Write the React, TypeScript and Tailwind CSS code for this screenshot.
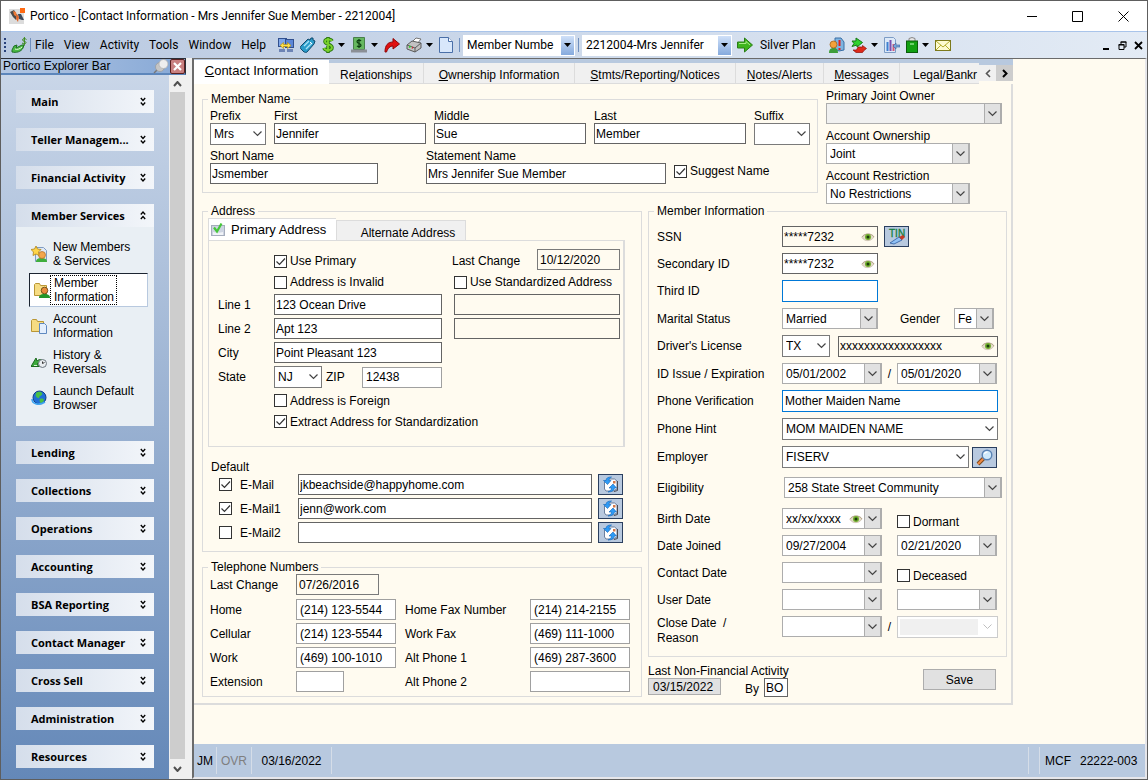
import type { ReactNode } from "react";
import { clsx } from "clsx";

const UI = "font-['Roboto','Noto_Sans',sans-serif]";

/* ---------- icons ---------- */

function Svg({ w = 16, h = 16, children }: { w?: number; h?: number; children: ReactNode }) {
  return (
    <svg width={w} height={h} viewBox={`0 0 ${w} ${h}`} className="shrink-0" aria-hidden="true">
      {children}
    </svg>
  );
}

const AppIcon = () => (
  <Svg>
    <rect y="1" width="15" height="15" fill="#dcdcdc" />
    <path d="M1 4l4-2 3 5-1 5-3-3z" fill="#4a4a4a" />
    <path d="M4 3l3 1 1 5-3-2z" fill="#f07a35" />
    <path d="M9 6l3 0 3 6-2 0-3-1z" fill="#3d4a5c" />
    <path d="M8 6l2 3-1 5-2-3z" fill="#e0662a" />
    <rect x="11" width="5" height="5" fill="#ff6a13" />
  </Svg>
);

const CashHandIcon = () => (
  <Svg w={17}>
    <path d="M1 13l2-4 3-1-1 3 6-3 2 0-1 3c-2 4-7 5-11 4z" fill="#4cbb45" stroke="#1c6e22" />
    <path d="M4 12c2 1 5 0 7-2" stroke="#e2f7da" fill="none" />
    <path d="M15.500 2.500C14 1 11.500 1.500 11.500 3s3.500 1 3.500 2.500-2.500 1.700-4 .5M13.400 0v8.500" stroke="#3c8a1c" fill="none" />
  </Svg>
);

const NetworkIcon = () => (
  <Svg>
    <rect x=".5" y="1.500" width="8" height="8" fill="#7fa7e8" stroke="#31508f" />
    <rect x="7.500" y="2.500" width="8" height="8" fill="#5b86d8" stroke="#31508f" />
    <path d="M1 12h6v3H1zM9 12h6v3H9z" fill="#6d84b5" />
    <path d="M2 8.500l3.500-3v2h4v-2l3.500 3-3.500 3v-2h-4v2z" fill="#ffe14a" stroke="#b58a00" strokeWidth=".6" />
  </Svg>
);

const TicketIcon = () => (
  <Svg>
    <path d="M1 9l7-7 2 1 1-2 2 0 0 2 2 1-1 3-7 8c-1 1-2 0-3 0l-3-3c-1-1-1-2 0-3z" fill="#2a9bc9" stroke="#104a6e" />
    <path d="M4 9l5-5M6 12l6-6" stroke="#a8e4f8" strokeWidth="1.400" />
    <path d="M10 5l2 2" stroke="#fff" />
  </Svg>
);

const DollarIcon = () => (
  <Svg w={12}>
    <path d="M10 4C9 2 3 1.500 3 4.500S10 7 10 10.500 3 14 2 11M6 0v16" stroke="#2d7a12" strokeWidth="3.600" fill="none" />
    <path d="M10 4C9 2 3 1.500 3 4.500S10 7 10 10.500 3 14 2 11M6 1v14" stroke="#7bd32d" strokeWidth="1.800" fill="none" />
  </Svg>
);

const BillIcon = () => (
  <Svg>
    <path d="M2.500.5h11v12h-11z" fill="#66b860" stroke="#48804a" />
    <path d="M0 12.500h16v3H0z" fill="#8b8f96" />
    <path d="M10 4C9 2.500 6 3 6 4.800S10 6.500 10 8.200 7 10 6 8.800M8 2v9" stroke="#0c3f10" strokeWidth="1.200" fill="none" />
  </Svg>
);

const ForwardIcon = () => (
  <Svg>
    <path d="M1 15C1 8 4 5 9 5V1.500L15.500 7 9 12V9C6 9 4 11 2.500 15z" fill="#e01010" stroke="#8e0808" />
  </Svg>
);

const PrinterIcon = () => (
  <Svg>
    <path d="M6 5l4-4 5 1-4 5z" fill="#fff" stroke="#777" />
    <path d="M1 8l5-4 9 2v5l-6 4-8-3z" fill="#c2c2c2" stroke="#5b5b5b" />
    <path d="M1 8l8 3 6-5M9 11v4" stroke="#5b5b5b" fill="none" />
    <path d="M3 9.500l1.500.5" stroke="#2fd02f" strokeWidth="2" />
    <path d="M6 10.500l1 .4" stroke="#d03030" strokeWidth="2" />
  </Svg>
);

const PageIcon = () => (
  <Svg w={14}>
    <path d="M.5.5h9l4 4v11H.5z" fill="#d8e7fb" stroke="#4a6fa8" />
    <path d="M9.500.5v4h4" fill="#fff" stroke="#4a6fa8" />
  </Svg>
);

const GoIcon = () => (
  <Svg>
    <path d="M.5 5h7V1l8 7-8 7v-4h-7z" fill="#3fb51d" stroke="#2a7d16" />
    <path d="M2 6.500h7V4.500l4 3.500" stroke="#a6ea85" fill="none" />
  </Svg>
);

const MemberAlertIcon = () => (
  <Svg>
    <path d="M6 1h6l3 4v8l-5 1-4-2z" fill="#7eb4e0" stroke="#3a6ea5" />
    <path d="M10.500 3v6M10.500 11v2" stroke="#e02020" strokeWidth="2" />
    <path d="M0 16c0-4 2-5 4.500-5S9 12 9 16z" fill="#3e9e3a" />
    <circle cx="4.500" cy="7.500" r="3.500" fill="#f4a13a" stroke="#a5631a" strokeWidth=".8" />
  </Svg>
);

const TransferIcon = () => (
  <Svg>
    <path d="M15.500 11.500l-4-3v1.500H7l-1.500 3H2l3 2.500h6.500l1-1.500z" fill="#e02a1a" stroke="#8e1008" strokeWidth=".7" />
    <path d="M1 4h4V1l6.500 4.500L6 10V8L1 9.500l2-3z" fill="#2fd32f" stroke="#187818" />
  </Svg>
);

const ChartIcon = () => (
  <Svg>
    <path d="M.5.5h9l2 2v13H.5z" fill="#dce9f8" stroke="#7d9cc5" />
    <path d="M3.500 5v9" stroke="#3f7fd0" strokeWidth="2" />
    <path d="M6.500 3v11" stroke="#7a4fb0" strokeWidth="2" />
    <path d="M9.500 7v7" stroke="#d05a7a" strokeWidth="2" />
    <path d="M9 9l3-3v2h4v2h-4v2z" fill="#7aa5db" stroke="#345f9c" strokeWidth=".6" />
  </Svg>
);

const BagIcon = () => (
  <Svg w={12}>
    <path d="M3 4V1.500L6 .5l3 1V4" fill="#e6e6e6" stroke="#888" />
    <rect x=".5" y="4" width="11" height="11.500" fill="#12a012" stroke="#0b5c0b" />
    <path d="M4 7h4" stroke="#8be08b" strokeWidth="1.500" />
  </Svg>
);

const EnvelopeIcon = () => (
  <Svg>
    <rect x=".5" y="3.500" width="15" height="10" fill="#fdfbd0" stroke="#7d7a1c" />
    <path d="M1 4l7 6 7-6M1 13l5-5M15 13l-5-5" stroke="#b3ad2c" fill="none" />
  </Svg>
);

const PinIcon = () => (
  <Svg>
    <path d="M1 15l5-5" stroke="#777" strokeWidth="1.400" />
    <circle cx="7" cy="9" r="4.500" fill="#c6c6c6" stroke="#999" strokeWidth=".7" />
    <circle cx="10.500" cy="6" r="4.500" fill="#eee" stroke="#aaa" strokeWidth=".7" />
  </Svg>
);

const NewMemberIcon = () => (
  <Svg>
    <path d="M4.500 1.500h8l3 3v11h-11z" fill="#dfe9f6" stroke="#7f9cc2" />
    <path d="M5 16c0-3 2-4 5.500-4s5.500 1 5.500 4z" fill="#3fae3c" />
    <circle cx="11" cy="9" r="3.500" fill="#f3a64c" stroke="#b36d20" strokeWidth=".7" />
    <path d="M5 0l1.500 3 3.500.5L7.500 6 8 9.500 5 8 2 9.500 2.500 6 0 3.500 3.500 3z" fill="#ffd548" stroke="#b08418" strokeWidth=".8" />
  </Svg>
);

const FolderShape = () => (
  <path d="M.5 13.500v-11l1-1h4l1 2h6v10z" fill="#f6dc82" stroke="#b99635" />
);

const FolderMemberIcon = () => (
  <Svg>
    <FolderShape />
    <path d="M5 16c0-3 2-4 5.500-4s5.500 1 5.500 4z" fill="#22962a" />
    <circle cx="10.500" cy="8.500" r="3.300" fill="#e88c3c" stroke="#59400e" strokeWidth=".8" />
  </Svg>
);

const FolderPageIcon = () => (
  <Svg>
    <FolderShape />
    <path d="M8.500 5.500h5l2 2v8h-7z" fill="#e4effd" stroke="#5f89c0" />
  </Svg>
);

const HistoryIcon = () => (
  <Svg>
    <path d="M0 12.500L5 4l1 3c2-2 5-2 6 0l-3 1-3 2 3 2.500z" fill="#3caa3c" stroke="#1d6a1f" />
    <path d="M3 11.500h3" stroke="#d6f2d2" />
    <circle cx="11.500" cy="9.500" r="4" fill="#e9edf0" stroke="#6d7780" />
    <path d="M11.500 7.500v2l2-1" stroke="#333" fill="none" />
  </Svg>
);

const GlobeIcon = () => (
  <Svg>
    <circle cx="8.500" cy="7.500" r="6.500" fill="#1f6fd6" stroke="#0f3c86" />
    <path d="M5 3c3-2 5-1 6 0s-1 3-2 3 0 3-2 2-3-2-2-5zM9 9c2-1 4 0 4 1s-2 3-3 3-2-3-1-4z" fill="#49bf45" />
    <path d="M1 9c0 5 7 7 13 3" stroke="#3fa4f0" strokeWidth="1.600" fill="none" />
  </Svg>
);

const EyeIcon = () => (
  <Svg w={14} h={10}>
    <path d="M1 5.500C3 1 11 1 13 5c-3 4.500-9 5-12 .5z" fill="#e3dac8" stroke="#cfc5b2" />
    <path d="M1 5C3 1 11 1 13 5" fill="none" stroke="#b7a78e" />
    <circle cx="7" cy="5" r="3" fill="#6fae2c" />
    <circle cx="7" cy="5" r="1.500" fill="#1c3a0c" />
  </Svg>
);

const TinIcon = () => (
  <Svg w={20} h={17}>
    <text x="2" y="9" fontSize="10" fill="#13803c" stroke="#13803c" strokeWidth=".3" fontFamily="Liberation Sans, sans-serif">TIN</text>
    <path d="M3 15l9-6 3 3-8 4z" fill="#8fc0f5" stroke="#2c5a9e" strokeWidth=".8" />
    <path d="M12 9l4-2 2 2-3 3z" fill="#c63c26" />
  </Svg>
);

const MagnifierIcon = () => (
  <Svg w={18} h={17}>
    <path d="M2 15l6-6" stroke="#7c4a1e" strokeWidth="4" />
    <path d="M2 15l6-6" stroke="#ef8a45" strokeWidth="2" />
    <circle cx="11" cy="6" r="4.800" fill="#cfe9fb" stroke="#5a83b4" strokeWidth="1.400" />
    <path d="M8.500 5c.5-1.500 2-2 3-1.800" stroke="#fff" fill="none" strokeWidth="1.200" />
  </Svg>
);

const MailSyncIcon = () => (
  <Svg w={17} h={17}>
    <path d="M2.500 6l4-3h6l2.500 2v8l-4 2H4l-1.500-2z" fill="#fff" stroke="#6b7f9e" />
    <path d="M11 5h2.500v2.500H11z" fill="#d37848" />
    <path d="M15.500 5v9.500L12 15.500" stroke="#4a4a52" fill="none" />
    <path d="M9.500 1C6 1 4 2 4 4.500H1.500l4 4 3.500-4H7C7 3 8 2 9.500 1z" fill="#2f9bf5" stroke="#0f63b8" strokeWidth=".6" />
    <path d="M6 16c4 0 6-1.500 6.500-4h2L11 8l-4 4h2.500c0 2-1.500 3-3.500 4z" fill="#2f9bf5" stroke="#0f63b8" strokeWidth=".6" />
  </Svg>
);

const TabCheckIcon = () => (
  <Svg>
    <rect x=".5" y="3.500" width="13" height="10" fill="#cdd4e2" stroke="#a5adbd" />
    <path d="M2 10c3 1 7 1 10 0v3H2z" fill="#f0f3f8" />
    <path d="M3 5.500l3 4 4.500-8" stroke="#45c63a" strokeWidth="2.200" fill="none" />
  </Svg>
);

const Caret = () => (
  <Svg w={7} h={4}>
    <path d="M0 0h7L3.500 4z" fill="#000" />
  </Svg>
);

function Chevrons({ up = false }: { up?: boolean }) {
  return (
    <Svg w={6} h={9}>
      <path
        d={up ? "M.8 3.500L3 1l2.200 2.500M.8 8L3 5.500 5.200 8" : "M.8 1L3 3.500 5.200 1M.8 5.500L3 8l2.200-2.500"}
        stroke="#000"
        strokeWidth="1.300"
        fill="none"
      />
    </Svg>
  );
}

/* ---------- form controls ---------- */

function TextBox({ id, value = "", label, className }: { id: string; value?: string; label?: string; className?: string }) {
  return (
    <input
      id={id}
      type="text"
      aria-label={label}
      defaultValue={value}
      className={clsx("h-[21px] min-w-0 border text-black outline-none", className)}
    />
  );
}

const BOX = "border-[#646464] bg-white px-px";
const SOFT = "border-[#a0a0a0] bg-white px-[3px]";
const FOCUS = "h-[22px] border-[#0078d7] bg-white px-[2px]";

function MaskedBox({ id, value, className, label }: { id: string; value: string; className: string; label?: string }) {
  return (
    <div className={clsx("relative flex h-[21px] items-center", className)}>
      <TextBox id={id} value={value} label={label} className="w-full border-[#646464] bg-inherit px-px" />
      <span className="absolute right-[3px]">
        <EyeIcon />
      </span>
    </div>
  );
}

type ComboProps = {
  id: string;
  value?: string;
  label?: string;
  className?: string;
  flat?: boolean;
  disabled?: boolean;
  masked?: boolean;
};

// flat: white drop-down with a bare chevron; otherwise the grey button style
function Combo({ id, value = "", label, className, flat = false, disabled = false, masked = false }: ComboProps) {
  return (
    <div className={clsx("relative", flat ? "h-[22px]" : "h-[21px]", className)}>
      <select
        id={id}
        aria-label={label}
        disabled={disabled}
        className={clsx(
          "block h-full w-full appearance-none border pl-[3px] text-black opacity-100 outline-none",
          flat ? "border-[#7a7a7a] pr-4" : "border-[#adadad] pr-[18px]",
          disabled ? "bg-[#f0f0f0]" : "bg-white",
        )}
      >
        <option>{value}</option>
      </select>
      <span
        className={clsx(
          "pointer-events-none absolute inset-y-0 right-0 flex w-[18px] items-center justify-center",
          !flat && "border border-r-2 border-[#adadad] bg-[#e1e1e1]",
        )}
      >
        <Svg w={9} h={6}>
          <path d="M.5.5l4 4 4-4" stroke="#444" strokeWidth="1.200" fill="none" />
        </Svg>
      </span>
      {masked && (
        <span className="pointer-events-none absolute inset-y-0 right-[19px] flex items-center">
          <EyeIcon />
        </span>
      )}
    </div>
  );
}

function Check({ label, checked = false, className }: { label: string; checked?: boolean; className?: string }) {
  return (
    <label className={clsx("flex items-center whitespace-nowrap", className)}>
      <span className="relative flex size-[13px] shrink-0">
        <input
          type="checkbox"
          defaultChecked={checked}
          className="peer size-[13px] appearance-none border border-[#333] bg-white"
        />
        <svg
          viewBox="0 0 13 13"
          className="pointer-events-none absolute inset-0 hidden peer-checked:block"
          aria-hidden="true"
        >
          <path d="M2.500 6.500l3 3 5.500-6" stroke="#333" strokeWidth="1.200" fill="none" />
        </svg>
      </span>
      <span>{label}</span>
    </label>
  );
}

function Group({ title, className, children }: { title: string; className?: string; children: ReactNode }) {
  return (
    <fieldset className={clsx("min-w-0 border border-[#dcdcdc]", className)}>
      <legend className="ml-[5px] px-[3px]">{title}</legend>
      {children}
    </fieldset>
  );
}

function Stacked({ id, label, children }: { id: string; label: string; children: ReactNode }) {
  return (
    <div className="flex flex-col">
      <label htmlFor={id}>{label}</label>
      {children}
    </div>
  );
}

function InfoRow({ id, label, children }: { id: string; label: string; children: ReactNode }) {
  return (
    <div className="flex items-center">
      <label htmlFor={id} className="w-[125px] shrink-0">
        {label}
      </label>
      {children}
    </div>
  );
}

function IconButton({ label, children }: { label: string; children: ReactNode }) {
  return (
    <button
      type="button"
      aria-label={label}
      className="flex h-[21px] w-[25px] shrink-0 items-center justify-center border border-[#2b3f5f] bg-[#b8c9df]"
    >
      {children}
    </button>
  );
}

/* ---------- window chrome ---------- */

function TitleBar() {
  return (
    <header className={clsx("flex h-[30px] items-center bg-white pl-2", UI)}>
      <AppIcon />
      <h1 className="ml-[5px] flex-1 text-xs">Portico - [Contact Information - Mrs Jennifer Sue Member - 2212004]</h1>
      <div className="flex">
        <button type="button" aria-label="Minimize" className="flex w-[45px] justify-center">
          <Svg w={11} h={11}><path d="M0 5.500h10" stroke="#000" /></Svg>
        </button>
        <button type="button" aria-label="Maximize" className="flex w-[45px] justify-center">
          <Svg w={11} h={11}><path d="M.5.500h10v10H.5z" stroke="#000" fill="none" /></Svg>
        </button>
        <button type="button" aria-label="Close" className="flex w-[47px] justify-center">
          <Svg w={11} h={11}><path d="M.5.500l10 10M10.500.5l-10 10" stroke="#000" fill="none" /></Svg>
        </button>
      </div>
    </header>
  );
}

const Divider = () => <span className="h-[14px] w-px shrink-0 bg-[#6f8fbf]" />;

function Tool({ label, caret = false, children }: { label: string; caret?: boolean; children: ReactNode }) {
  return (
    <button type="button" aria-label={label} className="flex items-center gap-1">
      {children}
      {caret && <Caret />}
    </button>
  );
}

function ToolCombo({ label, value, className }: { label: string; value: string; className: string }) {
  return (
    <div className={clsx("relative h-[21px] shrink-0 bg-white", className)}>
      <select aria-label={label} className="block h-full w-full appearance-none pr-4 pl-1 outline-none">
        <option>{value}</option>
      </select>
      <span className="pointer-events-none absolute inset-y-0 right-0 flex w-[14px] items-center justify-center border-y border-r border-white bg-linear-to-b from-[#cfe0f8] to-[#86aadd]">
        <Caret />
      </span>
    </div>
  );
}

function Toolbar() {
  return (
    <nav
      className={clsx(
        "flex h-[27px] items-center border-t border-[#a9c4ea] bg-linear-to-r from-[#b9c9e1] to-[#e3ebf5] pr-1 pl-[3px] text-xs whitespace-nowrap",
        UI,
      )}
    >
      <span className="mr-[5px] h-[14px] border-l-2 border-dotted border-[#27407a]" />
      <CashHandIcon />
      <span className="ml-[2px] flex">
        <Divider />
      </span>
      <div className="ml-1 flex w-[243px] gap-[10px]">
        {["File", "View", "Activity", "Tools", "Window", "Help"].map((m) => (
          <button key={m} type="button">
            {m}
          </button>
        ))}
      </div>
      <div className="flex items-center gap-[6px]">
        <Tool label="Network"><NetworkIcon /></Tool>
        <Tool label="Ticket"><TicketIcon /></Tool>
        <Tool label="Post transaction" caret><DollarIcon /></Tool>
        <Tool label="Cash" caret><BillIcon /></Tool>
        <Tool label="Forward"><ForwardIcon /></Tool>
        <Tool label="Print" caret><PrinterIcon /></Tool>
        <Tool label="New page"><PageIcon /></Tool>
        <Divider />
      </div>
      <ToolCombo label="Search by" value="Member Numbe" className="ml-[3px] w-[112px]" />
      <span className="mx-[3px] flex">
        <Divider />
      </span>
      <ToolCombo label="Member" value="2212004-Mrs Jennifer" className="w-[150px]" />
      <div className="ml-[5px] flex w-[92px] items-center gap-[7px]">
        <Tool label="Go"><GoIcon /></Tool>
        <span>Silver Plan</span>
      </div>
      <div className="flex flex-1 items-center gap-[6px]">
        <Tool label="Member alerts"><MemberAlertIcon /></Tool>
        <Tool label="Transfer" caret><TransferIcon /></Tool>
        <Tool label="Reports"><ChartIcon /></Tool>
        <Tool label="Shopping bag" caret><BagIcon /></Tool>
        <Tool label="Mail"><EnvelopeIcon /></Tool>
      </div>
      <div className="flex items-center gap-[7px]">
        <button type="button" aria-label="Minimize form">
          <Svg w={9} h={9}><path d="M1 8h6" stroke="#000" strokeWidth="2" /></Svg>
        </button>
        <button type="button" aria-label="Restore form">
          <Svg w={9} h={9}><path d="M3 3V1h5v5H6M2.500 1h6M1 3.500h5v5H1zM.5 4h6" stroke="#000" fill="none" /></Svg>
        </button>
        <button type="button" aria-label="Close form">
          <Svg w={9} h={9}><path d="M1 1l7 7M8 1L1 8" stroke="#000" strokeWidth="1.800" /></Svg>
        </button>
      </div>
    </nav>
  );
}

/* ---------- explorer bar ---------- */

const MEMBER_LINKS = [
  { lines: ["New Members", "& Services"], icon: <NewMemberIcon /> },
  { lines: ["Member", "Information"], icon: <FolderMemberIcon />, active: true },
  { lines: ["Account", "Information"], icon: <FolderPageIcon /> },
  { lines: ["History &", "Reversals"], icon: <HistoryIcon /> },
  { lines: ["Launch Default", "Browser"], icon: <GlobeIcon /> },
];

const SECTIONS = [
  "Main",
  "Teller Managem...",
  "Financial Activity",
  "Member Services",
  "Lending",
  "Collections",
  "Operations",
  "Accounting",
  "BSA Reporting",
  "Contact Manager",
  "Cross Sell",
  "Administration",
  "Resources",
];

function ExplorerBar() {
  return (
    <aside className="flex w-[185px] shrink-0 flex-col">
      <div className="flex h-[17px] items-center border-t border-r border-b-2 border-t-[#2b2f38] border-r-[#2b2f38] border-b-[#5c86bb] bg-linear-to-r from-[#b3c7e3] to-[#86a8d6] pl-[2px]">
        <h2 className="flex-1">Portico Explorer Bar</h2>
        <PinIcon />
        <button
          type="button"
          aria-label="Close explorer bar"
          className="ml-px flex size-[15px] items-center justify-center rounded-xs border border-[#5a2020] bg-[#c98080]"
        >
          <Svg w={9} h={9}><path d="M1 1l7 7M8 1L1 8" stroke="#fff" strokeWidth="2.200" /></Svg>
        </button>
      </div>
      <div className="flex flex-1">
        <div className="flex flex-1 flex-col gap-[15px] bg-linear-to-b from-[#c9d6e8] via-[#98b0d1] to-[#6488b8] px-[15px] pt-[15px] pb-[10px]">
          {SECTIONS.map((s) => {
            const open = s === "Member Services";
            return (
              <section key={s}>
                <button
                  type="button"
                  className="flex h-[23px] w-full items-center justify-between bg-linear-to-r from-[#d5deeb] to-[#f3f6fa] pr-2 pl-[15px] font-['Open_Sans','Noto_Sans',sans-serif] text-[11px] font-bold whitespace-nowrap"
                >
                  {s}
                  <Chevrons up={open} />
                </button>
                {open && (
                  <ul className="bg-[#e9eff4] pt-[9px] pb-[10px] pl-[13px]">
                    {MEMBER_LINKS.map((l) => (
                      <li key={l.lines[0]} className="py-px pr-[6px]">
                        <a
                          href="#"
                          className={clsx(
                            "flex h-[34px] items-center border",
                            l.active
                              ? "border-t-[#1b2430] border-r-[#b8c9df] border-b-[#b8c9df] border-l-[#1b2430] bg-white pl-1"
                              : "border-transparent pl-px",
                          )}
                        >
                          {l.icon}
                          <span
                            className={clsx(
                              "border whitespace-nowrap",
                              l.active ? "border-dotted border-black pr-[2px] pl-[3px]" : "ml-[2px] border-transparent pl-[3px]",
                            )}
                          >
                            {l.lines[0]}
                            <br />
                            {l.lines[1]}
                          </span>
                        </a>
                      </li>
                    ))}
                  </ul>
                )}
              </section>
            );
          })}
        </div>
        <div className="flex w-[17px] flex-col bg-[#f0f0f0] px-px">
          <span className="flex h-[17px] items-center justify-center">
            <Svg w={9} h={6}><path d="M1 5l3.500-4L8 5" stroke="#505050" strokeWidth="2" fill="none" /></Svg>
          </span>
          <span className="flex-1 bg-[#cdcdcd]" />
          <span className="flex h-[20px] items-center justify-center">
            <Svg w={9} h={6}><path d="M1 1l3.500 4L8 1" stroke="#505050" strokeWidth="2" fill="none" /></Svg>
          </span>
        </div>
      </div>
    </aside>
  );
}

/* ---------- form sections ---------- */

function FormTabs() {
  const tab = "h-[21px] shrink-0 border-r border-b border-[#dcdcdc] bg-[#f0f0f0] pt-[3px] text-center whitespace-nowrap";
  return (
    <div className="flex h-[25px] max-w-[819px] items-end bg-linear-to-b from-[#b8c9df] from-25% to-[#fffbf0] to-25%">
      <button type="button" className="h-6 w-[135px] shrink-0 bg-white pb-[2px] text-[13px]">
        <u>C</u>ontact Information
      </button>
      <button type="button" className={clsx(tab, "w-[95px]")}>Re<u>l</u>ationships</button>
      <button type="button" className={clsx(tab, "w-[151px]")}><u>O</u>wnership Information</button>
      <button type="button" className={clsx(tab, "w-[161px]")}><u>S</u>tmts/Reporting/Notices</button>
      <button type="button" className={clsx(tab, "w-[88px]")}><u>N</u>otes/Alerts</button>
      <button type="button" className={clsx(tab, "w-[76px]")}><u>M</u>essages</button>
      <button type="button" className={clsx(tab, "w-[79px] border-r-0 pl-[13px] text-left")}>
        Legal/<u>B</u>ankr
      </button>
      <button type="button" aria-label="Scroll tabs left" className="mb-[3px] flex h-4 w-[17px] items-center justify-center bg-[#f0f0f0]">
        <Svg w={6} h={9}><path d="M5 1L1.500 4.500 5 8" stroke="#555" strokeWidth="1.600" fill="none" /></Svg>
      </button>
      <button type="button" aria-label="Scroll tabs right" className="mb-[3px] flex h-4 w-[17px] items-center justify-center bg-[#cdcdcd]">
        <Svg w={6} h={9}><path d="M1 1l3.500 3.500L1 8" stroke="#000" strokeWidth="2" fill="none" /></Svg>
      </button>
    </div>
  );
}

function MemberName() {
  return (
    <Group title="Member Name" className="mt-[3px] w-[616px]">
      <div className="flex flex-col gap-1 px-[7px] pt-[3px] pb-2">
        <div className="flex gap-2">
          <Stacked id="prefix" label="Prefix"><Combo flat id="prefix" value="Mrs" className="w-14" /></Stacked>
          <Stacked id="first" label="First"><TextBox id="first" value="Jennifer" className={clsx(BOX, "w-[152px]")} /></Stacked>
          <Stacked id="middle" label="Middle"><TextBox id="middle" value="Sue" className={clsx(BOX, "w-[152px]")} /></Stacked>
          <Stacked id="last" label="Last"><TextBox id="last" value="Member" className={clsx(BOX, "w-[152px]")} /></Stacked>
          <Stacked id="suffix" label="Suffix"><Combo flat id="suffix" className="w-14" /></Stacked>
        </div>
        <div className="flex items-end gap-2">
          <Stacked id="short" label="Short Name"><TextBox id="short" value="Jsmember" className={clsx(BOX, "w-[168px]")} /></Stacked>
          <div className="ml-10">
            <Stacked id="statement" label="Statement Name">
              <TextBox id="statement" value="Mrs Jennifer Sue Member" className={clsx(BOX, "w-[240px]")} />
            </Stacked>
          </div>
          <Check label="Suggest Name" checked className="mb-[6px] gap-[3px]" />
        </div>
      </div>
    </Group>
  );
}

function AccountBox() {
  return (
    <div className="flex flex-col gap-[5px]">
      <Stacked id="joint" label="Primary Joint Owner"><Combo id="joint" disabled className="w-[176px]" /></Stacked>
      <Stacked id="ownership" label="Account Ownership"><Combo id="ownership" value="Joint" className="w-36" /></Stacked>
      <Stacked id="restriction" label="Account Restriction">
        <Combo id="restriction" value="No Restrictions" className="w-36" />
      </Stacked>
    </div>
  );
}

function AddressTab() {
  const field = clsx(BOX, "w-[168px]");
  const blank = "w-[166px] border-[#646464] bg-[#fffbf0]";
  return (
    <div className="w-[417px] border border-r-2 border-[#dcdcdc] pt-2 pr-[3px] pb-[14px] pl-[9px]">
      <div className="flex h-[21px] items-center">
        <Check label="Use Primary" checked className="ml-14 w-[178px] gap-[3px] pt-[3px]" />
        <label htmlFor="addrChange" className="w-[85px] pt-[3px]">Last Change</label>
        <TextBox id="addrChange" value="10/12/2020" className="w-[83px] border-[#7a7a7a] bg-[#fffbf0] px-[2px]" />
      </div>
      <div className="flex h-6 items-center">
        <Check label="Address is Invalid" className="ml-14 w-[180px] gap-[3px]" />
        <Check label="Use Standardized Address" className="gap-[3px]" />
      </div>
      <div className="grid grid-cols-[56px_180px_166px] items-center gap-y-[3px]">
        <label htmlFor="line1">Line 1</label>
        <TextBox id="line1" value="123 Ocean Drive" className={field} />
        <TextBox id="std1" label="Standardized line 1" className={blank} />
        <label htmlFor="line2">Line 2</label>
        <TextBox id="line2" value="Apt 123" className={field} />
        <TextBox id="std2" label="Standardized line 2" className={blank} />
        <label htmlFor="city">City</label>
        <TextBox id="city" value="Point Pleasant 123" className={field} />
      </div>
      <div className="mt-[3px] flex items-center">
        <label htmlFor="state" className="w-14">State</label>
        <Combo flat id="state" value="NJ" className="w-12" />
        <label htmlFor="zip" className="ml-1 w-9">ZIP</label>
        <TextBox id="zip" value="12438" className={clsx(SOFT, "w-20")} />
      </div>
      <div className="mt-[2px] ml-14 flex flex-col">
        <Check label="Address is Foreign" className="h-[21px] gap-[3px]" />
        <Check label="Extract Address for Standardization" checked className="h-[21px] gap-[3px]" />
      </div>
    </div>
  );
}

function Address() {
  const emails = [
    { label: "E-Mail", value: "jkbeachside@happyhome.com", on: true },
    { label: "E-Mail1", value: "jenn@work.com", on: true },
    { label: "E-Mail2", value: "", on: false },
  ];
  return (
    <Group title="Address">
      <div className="pr-[5px] pb-2 pl-[5px]">
        <div className="flex h-[22px] items-end">
          <button
            type="button"
            className="flex h-[22px] w-32 items-center gap-1 border-t border-l border-[#dcdcdc] bg-white pl-[2px] text-[13px] whitespace-nowrap"
          >
            <TabCheckIcon />
            Primary Address
          </button>
          <button type="button" className="h-5 w-[130px] border border-b-0 border-[#dcdcdc] bg-[#f0f0f0] pt-1 pl-[14px]">
            Alternate Address
          </button>
        </div>
        <AddressTab />
        <div className="mt-[13px] pl-[3px]">Default</div>
        <div className="flex flex-col gap-[3px]">
          {emails.map((e) => (
            <div key={e.label} className="flex items-center">
              <Check label={e.label} checked={e.on} className="ml-[11px] w-[79px] gap-2" />
              <TextBox id={e.label} label={e.label} value={e.value} className={clsx(BOX, "mr-[6px] w-[294px]")} />
              <IconButton label={`Send to ${e.label}`}><MailSyncIcon /></IconButton>
            </div>
          ))}
        </div>
      </div>
    </Group>
  );
}

function Telephones() {
  const rows = [
    ["Home", "(214) 123-5544", "Home Fax Number", "(214) 214-2155"],
    ["Cellular", "(214) 123-5544", "Work Fax", "(469) 111-1000"],
    ["Work", "(469) 100-1010", "Alt Phone 1", "(469) 287-3600"],
    ["Extension", "", "Alt Phone 2", ""],
  ];
  return (
    <Group title="Telephone Numbers" className="mt-2">
      <div className="flex flex-col gap-[3px] pb-1 pl-[7px]">
        <div className="mb-px flex items-center">
          <label htmlFor="telChange" className="w-[86px]">Last Change</label>
          <TextBox id="telChange" value="07/26/2016" className="w-[83px] border-[#7a7a7a] bg-[#fffbf0] px-[2px]" />
        </div>
        {rows.map(([l, lv, r, rv]) => (
          <div key={l} className="grid grid-cols-[86px_109px_125px_100px] items-center">
            <label htmlFor={l}>{l}</label>
            <TextBox id={l} value={lv} className={clsx(SOFT, l === "Extension" ? "w-12" : "w-[100px]")} />
            <label htmlFor={r}>{r}</label>
            <TextBox id={r} value={rv} className={clsx(SOFT, "w-[100px]")} />
          </div>
        ))}
      </div>
    </Group>
  );
}

function MemberInformation() {
  return (
    <Group title="Member Information">
      <div className="pt-2 pb-[10px] pl-2">
        <div className="flex flex-col gap-[6px]">
          <InfoRow id="ssn" label="SSN">
            <MaskedBox id="ssn" value="*****7232" className="mr-[6px] w-24 bg-[#fffbf0]" />
            <IconButton label="TIN"><TinIcon /></IconButton>
          </InfoRow>
          <InfoRow id="secondary" label="Secondary ID">
            <MaskedBox id="secondary" value="*****7232" className="w-24 bg-white" />
          </InfoRow>
          <InfoRow id="third" label="Third ID"><TextBox id="third" className={clsx(FOCUS, "w-24")} /></InfoRow>
          <InfoRow id="marital" label="Marital Status">
            <Combo id="marital" value="Married" className="w-24" />
            <label htmlFor="gender" className="ml-[22px] w-[54px]">Gender</label>
            <Combo id="gender" value="Fe" className="w-10" />
          </InfoRow>
          <InfoRow id="licenseState" label="Driver's License">
            <Combo flat id="licenseState" value="TX" className="mr-2 w-12" />
            <MaskedBox id="license" label="License number" value="xxxxxxxxxxxxxxxxx" className="w-40 bg-[#fffbf0]" />
          </InfoRow>
          <InfoRow id="issue" label="ID Issue / Expiration">
            <Combo id="issue" value="05/01/2002" className="w-[100px]" />
            <span className="w-[15px] text-center">/</span>
            <Combo id="expiration" label="Expiration" value="05/01/2020" className="w-[100px]" />
          </InfoRow>
          <InfoRow id="verification" label="Phone Verification">
            <TextBox id="verification" value="Mother Maiden Name" className={clsx(FOCUS, "w-[216px]")} />
          </InfoRow>
          <InfoRow id="hint" label="Phone Hint"><Combo flat id="hint" value="MOM MAIDEN NAME" className="w-[216px]" /></InfoRow>
          <InfoRow id="employer" label="Employer">
            <Combo flat id="employer" value="FISERV" className="mr-[3px] w-[187px]" />
            <IconButton label="Find employer"><MagnifierIcon /></IconButton>
          </InfoRow>
        </div>
        <div className="mt-[9px] mb-[10px]">
          <InfoRow id="eligibility" label="Eligibility">
            <Combo id="eligibility" value="258 State Street Community" className="ml-[2px] w-[218px]" />
          </InfoRow>
        </div>
        <div className="flex flex-col gap-[6px]">
          <InfoRow id="birth" label="Birth Date">
            <Combo masked id="birth" value="xx/xx/xxxx" className="w-[100px]" />
            <Check label="Dormant" className="ml-[15px] gap-[3px] pt-[6px]" />
          </InfoRow>
          <InfoRow id="joined" label="Date Joined">
            <Combo id="joined" value="09/27/2004" className="w-[100px]" />
            <Combo id="joined2" label="Branch date" value="02/21/2020" className="ml-[15px] w-[100px]" />
          </InfoRow>
          <InfoRow id="contact" label="Contact Date">
            <Combo id="contact" className="w-[100px]" />
            <Check label="Deceased" className="ml-[15px] gap-[3px] pt-[6px]" />
          </InfoRow>
          <InfoRow id="user" label="User Date">
            <Combo id="user" className="w-[100px]" />
            <Combo id="user2" label="Second user date" className="ml-[15px] w-[100px]" />
          </InfoRow>
          <div className="flex items-start">
            <label htmlFor="closeDate" className="w-[125px] leading-[15px]">
              Close Date&nbsp; /<br />
              Reason
            </label>
            <Combo id="closeDate" className="w-[100px]" />
            <span className="w-[15px] pt-1 text-center">/</span>
            <div className="relative h-[22px] w-[101px]">
              <select
                aria-label="Close reason"
                disabled
                className="block h-full w-full appearance-none border border-[#ccc] bg-white opacity-100"
              />
              <span className="pointer-events-none absolute inset-y-[3px] right-[6px] left-[3px] flex items-center justify-between">
                <span className="h-full w-[78px] bg-[#f0f0f0]" />
                <Svg w={9} h={6}>
                  <path d="M.5.5l4 4 4-4" stroke="#bfbfbf" fill="none" />
                </Svg>
              </span>
            </div>
          </div>
        </div>
      </div>
    </Group>
  );
}

function FormFooter() {
  return (
    <div className="mt-[7px] flex items-start justify-between pr-[11px]">
      <div>
        <label htmlFor="lastActivity">Last Non-Financial Activity</label>
        <div className="flex items-start">
          <input
            id="lastActivity"
            type="text"
            readOnly
            defaultValue="03/15/2022"
            className="h-[17px] w-[73px] border border-[#adadad] bg-[#e1e1e1] px-1 outline-none"
          />
          <label htmlFor="by" className="ml-6 w-[19px] pt-1">By</label>
          <input
            id="by"
            type="text"
            defaultValue="BO"
            className="h-[19px] w-6 border border-[#646464] bg-white px-px outline-none"
          />
        </div>
      </div>
      <button type="submit" className="mt-[5px] h-[21px] w-[73px] border border-[#adadad] bg-[#e1e1e1]">
        Save
      </button>
    </div>
  );
}

function StatusBar() {
  const cell = "flex h-[27px] items-center border-r border-[#d5dde8]";
  return (
    <footer className="flex h-[33px] items-center bg-[#b8c9df]">
      <span className={clsx(cell, "w-[23px] pl-[3px]")}>JM</span>
      <span className={clsx(cell, "w-[35px] justify-center text-[#7f7f7f]")}>OVR</span>
      <span className={clsx(cell, "w-20 justify-center")}>03/16/2022</span>
      <span className={clsx(cell, "flex-1")} />
      <span className={clsx(cell, "w-[11px]")} />
      <span className="w-10 pl-[5px]">MCF</span>
      <span className="w-[65px]">22222-003</span>
    </footer>
  );
}

export default function App() {
  return (
    <div className="flex min-h-screen flex-col border-x border-y border-[#5e5e5e] bg-[#f0f0f0] font-['Liberation_Sans',Arial,sans-serif] text-xs leading-[14px] text-black">
      <TitleBar />
      <Toolbar />
      <div className="flex flex-1">
        <ExplorerBar />
        <main className="ml-[6px] flex flex-1 flex-col border-t border-r-2 border-b-2 border-l-2 border-t-[#6b6b6b] border-r-[#e6e6ea] border-b-[#e6e6ea] border-l-[#6b6b6b] bg-[#fffbf0]">
          <FormTabs />
          <form className="max-w-[819px] border-r-2 border-b-2 border-[#dcdcdc] pt-[5px] pb-[6px] pl-2">
            <div className="flex items-start gap-2">
              <MemberName />
              <AccountBox />
            </div>
            <div className="flex items-start gap-[6px]">
              <div className="w-[440px]">
                <Address />
                <Telephones />
              </div>
              <div className="w-[359px]">
                <MemberInformation />
                <FormFooter />
              </div>
            </div>
          </form>
          <div className="flex-1" />
          <StatusBar />
        </main>
      </div>
    </div>
  );
}
